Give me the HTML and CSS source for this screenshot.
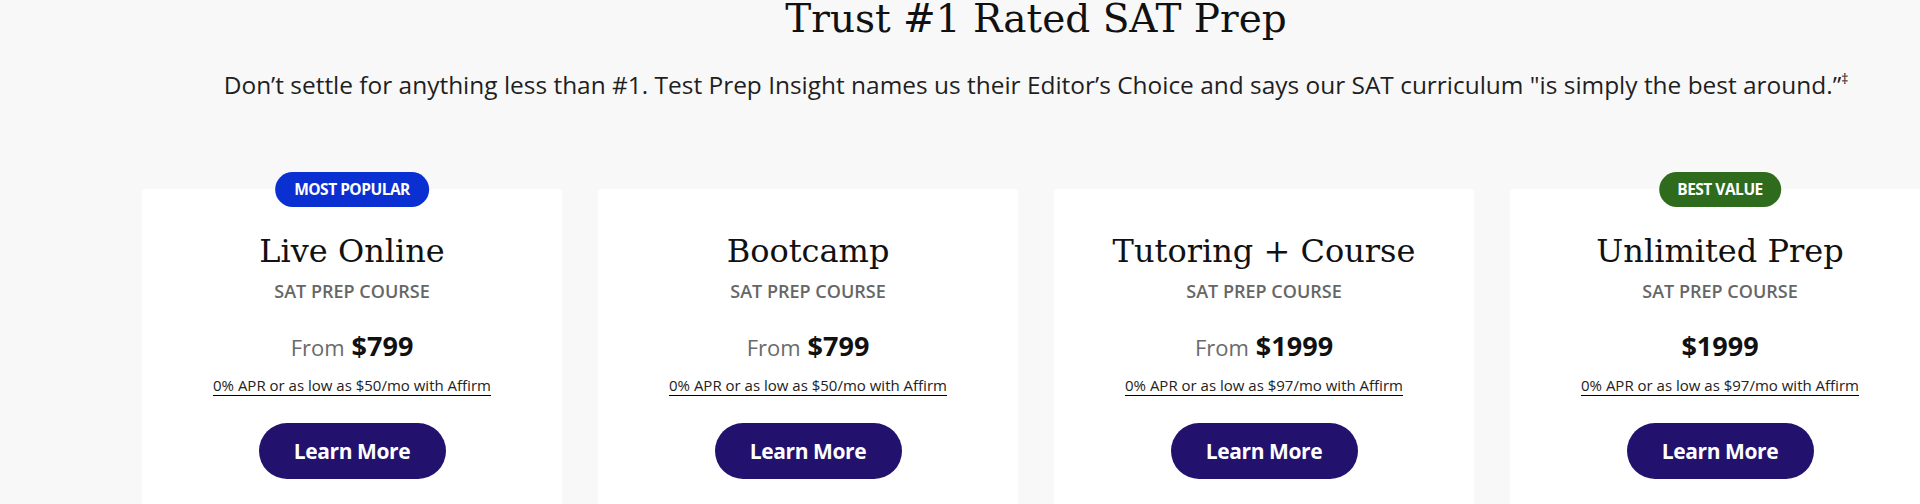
FILE: index.html
```html
<!DOCTYPE html>
<html lang="en">
<head>
<meta charset="utf-8">
<title>Trust #1 Rated SAT Prep</title>
<link rel="stylesheet" href="styles.css">
</head>
<body>
<main class="wrap">
  <header class="intro">
    <h1 class="intro-title">Trust #1 Rated SAT Prep</h1>
    <p class="intro-sub">Don’t settle for anything less than #1. Test Prep Insight names us their Editor’s Choice and says our SAT curriculum "is simply the best around.”<sup class="dagger">‡</sup></p>
  </header>
  <section class="cards">
    <article class="card">
      <span class="badge badge-blue">MOST POPULAR</span>
      <h2 class="card-title">Live Online</h2>
      <div class="card-kicker">SAT PREP COURSE</div>
      <div class="card-price"><span class="from">From</span> $799</div>
      <div class="card-affirm"><span class="affirm-link">0% APR or as low as $50/mo with Affirm</span></div>
      <a class="btn" href="#">Learn More</a>
    </article>
    <article class="card">
      <h2 class="card-title">Bootcamp</h2>
      <div class="card-kicker">SAT PREP COURSE</div>
      <div class="card-price"><span class="from">From</span> $799</div>
      <div class="card-affirm"><span class="affirm-link">0% APR or as low as $50/mo with Affirm</span></div>
      <a class="btn" href="#">Learn More</a>
    </article>
    <article class="card">
      <h2 class="card-title">Tutoring + Course</h2>
      <div class="card-kicker">SAT PREP COURSE</div>
      <div class="card-price"><span class="from">From</span> $1999</div>
      <div class="card-affirm"><span class="affirm-link">0% APR or as low as $97/mo with Affirm</span></div>
      <a class="btn" href="#">Learn More</a>
    </article>
    <article class="card">
      <span class="badge badge-green">BEST VALUE</span>
      <h2 class="card-title">Unlimited Prep</h2>
      <div class="card-kicker">SAT PREP COURSE</div>
      <div class="card-price">$1999</div>
      <div class="card-affirm"><span class="affirm-link">0% APR or as low as $97/mo with Affirm</span></div>
      <a class="btn" href="#">Learn More</a>
    </article>
  </section>
</main>
</body>
</html>
```

FILE: styles.css
```css
html, body {
  margin: 0;
  padding: 0;
  background: #f8f8f8;
  overflow: hidden;
  height: 504px;
}

body {
  font-family: "Open Sans", "Liberation Sans", sans-serif;
  color: #1a1a1a;
}

.wrap {
  width: 1788px;
  margin-left: 142px;
}

.intro {
  text-align: center;
}

.intro-title {
  font-family: "DejaVu Serif", "Liberation Serif", serif;
  font-weight: 400;
  font-size: 39px;
  line-height: 38px;
  margin: 0;
  color: #111;
}

.intro-sub {
  font-size: 24.45px;
  line-height: 32px;
  margin: 31px 0 0;
  color: #1f1f1f;
}

.dagger {
  font-size: 14px;
  line-height: 0;
  vertical-align: 10px;
}

.cards {
  display: grid;
  grid-template-columns: repeat(4, 420px);
  column-gap: 36px;
  margin-top: 88px;
}

.card {
  position: relative;
  background: #fff;
  border-radius: 4px;
  min-height: 340px;
  padding-top: 42px;
  display: flex;
  flex-direction: column;
  align-items: center;
  text-align: center;
}

.badge {
  position: absolute;
  top: -17px;
  left: 50%;
  transform: translateX(-50%);
  height: 35px;
  line-height: 35px;
  padding: 0 19px;
  border-radius: 18px;
  color: #fff;
  font-weight: 700;
  font-size: 15.5px;
  letter-spacing: -0.5px;
  white-space: nowrap;
}

.badge-blue { background: #0b30d2; }
.badge-green { background: #2e6b1d; padding: 0 18px; }

.card-title {
  font-family: "DejaVu Serif", "Liberation Serif", serif;
  font-weight: 400;
  font-size: 32px;
  line-height: 40px;
  margin: 0;
  color: #111;
}

.card-kicker {
  margin-top: 8px;
  font-size: 18px;
  line-height: 24px;
  font-weight: 600;
  color: #666;
}

.card-price {
  margin-top: 27px;
  font-size: 27px;
  line-height: 32px;
  font-weight: 700;
  color: #111;
}

.from {
  font-size: 22px;
  line-height: 1;
  font-weight: 400;
  color: #6a6a6a;
}

.card-affirm {
  margin-top: 13px;
  font-size: 15px;
  line-height: 20px;
}

.affirm-link {
  display: inline-block;
  color: #222;
  border-bottom: 1px solid #000;
}

.btn {
  margin-top: 27px;
  width: 187px;
  height: 56px;
  border-radius: 28px;
  background: #23116e;
  color: #fff;
  text-decoration: none;
  font-weight: 700;
  font-size: 21px;
  letter-spacing: -0.4px;
  display: flex;
  align-items: center;
  justify-content: center;
}
```
